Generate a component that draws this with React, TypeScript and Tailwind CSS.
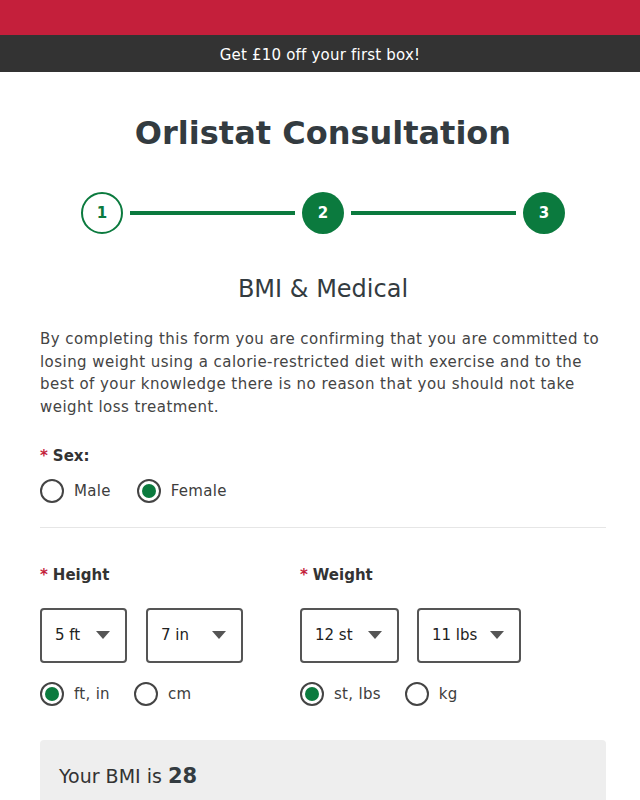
import { useState } from "react"

function Radio({ label, checked, onClick }: { label: string; checked: boolean; onClick: () => void }) {
  return (
    <button onClick={onClick} className="flex items-center gap-[10px] text-[15px] tracking-[0.3px] text-[#3d3d3d]">
      <span className="flex h-[24px] w-[24px] items-center justify-center rounded-full border-2 border-[#444]">
        {checked && <span className="h-[14px] w-[14px] rounded-full bg-[#0b7a3e]"></span>}
      </span>
      <span>{label}</span>
    </button>
  )
}

function Select({ value, width }: { value: string; width: string }) {
  return (
    <div className={`flex h-[55px] items-center justify-between rounded-[4px] border-2 border-[#555] pl-[13px] pr-[15px] text-[15px] text-[#222] ${width}`}>
      <span>{value}</span>
      <svg width="14" height="8" viewBox="0 0 14 8"><path d="M0 0h14L7 8z" fill="#555" /></svg>
    </div>
  )
}

function Label({ text }: { text: string }) {
  return (
    <div className="flex items-center gap-[5px] text-[15px] font-bold text-[#333]">
      <span className="text-[#c41f3b]">*</span>
      <span>{text}</span>
    </div>
  )
}

export default function App() {
  const [sex, setSex] = useState("female")
  const [hUnit, setHUnit] = useState("ftin")
  const [wUnit, setWUnit] = useState("stlbs")

  return (
    <div className="min-h-[800px] bg-white font-['DejaVu_Sans',sans-serif]">
      <div className="h-[35px] bg-[#c41f3b]"></div>
      <div className="flex h-[37px] items-center justify-center bg-[#333] pt-[3px] text-[15px] tracking-[0.2px] text-white">
        Get £10 off your first box!
      </div>

      <div className="pl-[40px] pr-[34px]">
        <h1 className="mt-[38px] text-center text-[32px] font-bold leading-[46px] text-[#333b40]">Orlistat Consultation</h1>

        {/* Stepper */}
        <div className="mx-auto mt-[36px] flex w-[484px] items-center">
          <div className="flex h-[42px] w-[42px] shrink-0 items-center justify-center rounded-full border-2 border-[#0b7a3e] text-[15px] font-bold text-[#0b7a3e]">1</div>
          <div className="mx-[7px] h-[4px] flex-1 bg-[#0b7a3e]"></div>
          <div className="flex h-[42px] w-[42px] shrink-0 items-center justify-center rounded-full bg-[#0b7a3e] text-[15px] font-bold text-white">2</div>
          <div className="mx-[7px] h-[4px] flex-1 bg-[#0b7a3e]"></div>
          <div className="flex h-[42px] w-[42px] shrink-0 items-center justify-center rounded-full bg-[#0b7a3e] text-[15px] font-bold text-white">3</div>
        </div>

        <h2 className="mt-[38px] text-center text-[24px] leading-[34px] text-[#333b40]">BMI &amp; Medical</h2>

        <p className="mt-[22px] text-[15px] leading-[22.7px] tracking-[0.45px] text-[#444]">
          By completing this form you are confirming that you are committed to losing weight using a calorie-restricted diet with exercise and to the best of your knowledge there is no reason that you should not take weight loss treatment.
        </p>

        <div className="mt-[26px]">
          <Label text="Sex:" />
          <div className="mt-[12px] flex gap-[26px]">
            <Radio label="Male" checked={sex === "male"} onClick={() => setSex("male")} />
            <Radio label="Female" checked={sex === "female"} onClick={() => setSex("female")} />
          </div>
        </div>

        <div className="mt-[24px] border-t border-[#e6e6e6]"></div>

        <div className="mt-[36px] flex">
          <div className="w-[260px]">
            <Label text="Height" />
            <div className="mt-[21px] flex gap-[19px]">
              <Select value="5 ft" width="w-[87px]" />
              <Select value="7 in" width="w-[97px]" />
            </div>
            <div className="mt-[19px] flex gap-[24px]">
              <Radio label="ft, in" checked={hUnit === "ftin"} onClick={() => setHUnit("ftin")} />
              <Radio label="cm" checked={hUnit === "cm"} onClick={() => setHUnit("cm")} />
            </div>
          </div>
          <div>
            <Label text="Weight" />
            <div className="mt-[21px] flex gap-[18px]">
              <Select value="12 st" width="w-[99px]" />
              <Select value="11 lbs" width="w-[104px]" />
            </div>
            <div className="mt-[19px] flex gap-[24px]">
              <Radio label="st, lbs" checked={wUnit === "stlbs"} onClick={() => setWUnit("stlbs")} />
              <Radio label="kg" checked={wUnit === "kg"} onClick={() => setWUnit("kg")} />
            </div>
          </div>
        </div>

        <div className="mt-[34px] rounded-[4px] bg-[#eee] px-[19px] pb-[40px] pt-[21px] text-[19px] text-[#333]">
          Your BMI is <span className="text-[21px] font-bold text-[#333b40]">28</span>
        </div>
      </div>
    </div>
  )
}
